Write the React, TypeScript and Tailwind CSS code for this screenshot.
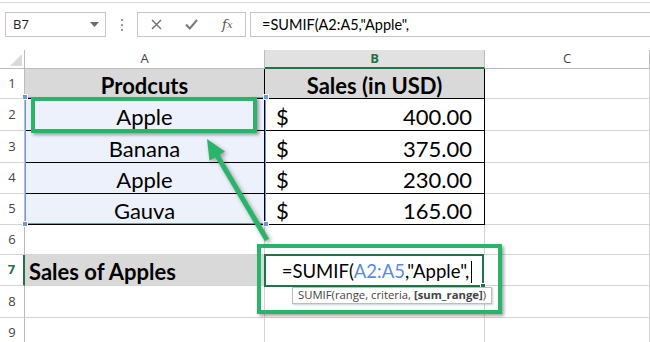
import React from "react";

const GRID = "border-[#d4d4d4]";

function RowHead({ n, active = false, h }: { n: number; active?: boolean; h: string }) {
  return (
    <div
      className={`${h} w-[25px] shrink-0 flex items-center justify-center border-b ${GRID} font-['Open_Sans',sans-serif] text-[13px] ${
        active
          ? "border-r-2 border-r-[#217346] text-[#217346] font-bold"
          : "border-r border-r-[#bcbcbc] text-[#444]"
      }`}
    >
      {n}
    </div>
  );
}

function Row({ n, h, active, a, b }: { n: number; h: string; active?: boolean; a?: React.ReactNode; b?: React.ReactNode }) {
  return (
    <div className={`flex ${h}`}>
      <RowHead n={n} h={h} active={active} />
      {a ?? <div className={`w-[240px] shrink-0 border-r border-b ${GRID}`} />}
      {b ?? <div className={`w-[220px] shrink-0 border-r border-b ${GRID}`} />}
      <div className={`flex-1 border-r border-b ${GRID}`} />
    </div>
  );
}

function Product({ name }: { name: string }) {
  return (
    <div className="w-[240px] shrink-0 border-r border-b border-black bg-[#edf1fb] flex items-center justify-center pt-[3px] text-[22px] text-black">
      {name}
    </div>
  );
}

function Amount({ value }: { value: string }) {
  return (
    <div className="w-[220px] shrink-0 border-r border-b border-black flex items-center justify-between pl-[11px] pr-[12px] pt-[3px] text-[22px] text-black">
      <span>$</span>
      <span>{value}</span>
    </div>
  );
}

function Handle({ className }: { className: string }) {
  return <div className={`absolute w-[6px] h-[6px] bg-[#6d96e8] border border-white ${className}`} />;
}

export default function App() {
  return (
    <div className="relative w-[650px] h-[342px] overflow-hidden bg-white font-['Lato',sans-serif]">
      {/* Formula toolbar */}
      <div className="h-[48px] mt-[2px] border-t border-[#d9d9d9] flex items-start pt-[9px] pl-[5px]">
        <div className="w-[101px] h-[25px] shrink-0 border border-[#c6c6c6] flex items-center justify-between pl-[7px] pr-[6px]">
          <span className="font-['Open_Sans',sans-serif] text-[13px] text-[#222]">B7</span>
          <svg width="9" height="5" viewBox="0 0 9 5">
            <path d="M0 0h9L4.5 5z" fill="#6b6b6b" />
          </svg>
        </div>
        <div className="w-[31px] h-[25px] shrink-0 flex flex-col items-center justify-center gap-[3px]">
          <div className="w-[2px] h-[2px] bg-[#9a9a9a]" />
          <div className="w-[2px] h-[2px] bg-[#9a9a9a]" />
          <div className="w-[2px] h-[2px] bg-[#9a9a9a]" />
        </div>
        <div className="w-[109px] h-[25px] shrink-0 border border-[#c6c6c6] flex items-center">
          <div className="w-[36px] ml-[1px] flex justify-center">
            <svg width="11" height="11" viewBox="0 0 11 11">
              <path d="M1 1l9 9M10 1l-9 9" stroke="#6e6e6e" strokeWidth="1.4" />
            </svg>
          </div>
          <div className="w-[36px] flex justify-center">
            <svg width="13" height="11" viewBox="0 0 13 11">
              <path d="M1 5.5l3.8 4L12 1" stroke="#7a7a7a" strokeWidth="2" fill="none" />
            </svg>
          </div>
          <div className="w-[36px] flex justify-center font-['DejaVu_Serif',serif] italic text-[13px] text-[#555] leading-none">
            f<span className="text-[10px] relative top-[2px]">x</span>
          </div>
        </div>
        <div className="ml-[4px] flex-1 h-[25px] border-y border-l border-[#c6c6c6] flex items-center pl-[11px] text-[14.5px] text-black">
          =SUMIF(A2:A5,"Apple",
        </div>
      </div>

      {/* Column headers */}
      <div className="flex h-[19px] font-['Open_Sans',sans-serif] text-[13px] text-[#444]">
        <div className="w-[25px] shrink-0 border-r border-b border-[#bcbcbc] flex items-end justify-end pr-[2px] pb-[2px]">
          <svg width="12" height="12" viewBox="0 0 12 12">
            <path d="M12 0v12H0z" fill="#dadada" />
          </svg>
        </div>
        <div className="w-[240px] shrink-0 border-r border-b border-[#bcbcbc] flex items-center justify-center">A</div>
        <div className="w-[220px] shrink-0 border-r border-[#bcbcbc] border-b-2 border-b-[#217346] bg-[#e1e1e1] flex items-center justify-center font-bold text-[#217346]">
          B
        </div>
        <div className="flex-1 border-r border-b border-[#bcbcbc] flex items-center justify-center">C</div>
      </div>

      {/* Sheet rows */}
      <Row
        n={1}
        h="h-[30px]"
        a={
          <div className="w-[240px] shrink-0 border-r border-b border-black bg-[#d9d9d9] flex items-center justify-center pt-[3px] text-[22px] font-bold text-black">
            Prodcuts
          </div>
        }
        b={
          <div className="w-[220px] shrink-0 border-r border-b border-black bg-[#d9d9d9] flex items-center justify-center pt-[3px] text-[22px] font-bold text-black">
            Sales (in USD)
          </div>
        }
      />
      <Row n={2} h="h-[32px]" a={<Product name="Apple" />} b={<Amount value="400.00" />} />
      <Row n={3} h="h-[32px]" a={<Product name="Banana" />} b={<Amount value="375.00" />} />
      <Row n={4} h="h-[31px]" a={<Product name="Apple" />} b={<Amount value="230.00" />} />
      <Row n={5} h="h-[31px]" a={<Product name="Gauva" />} b={<Amount value="165.00" />} />
      <Row n={6} h="h-[30px]" />
      <Row
        n={7}
        h="h-[31px]"
        active
        a={
          <div className={`w-[240px] shrink-0 border-r border-b ${GRID} bg-[#d9d9d9] flex items-center pl-[4px] pt-[3px] text-[22px] font-bold text-black`}>
            Sales of Apples
          </div>
        }
        b={
          <div className="relative w-[220px] shrink-0 border-2 border-[#217346] -ml-[1px] -mt-[1px] h-[33px] flex items-center justify-center pl-[6px] pt-[3px] text-[18.5px] text-black">
            <span>
              =SUMIF(<span className="text-[#5a8be0]">A2:A5</span>,"Apple",
            </span>
            <span className="ml-[2px] w-px h-[22px] bg-black" />
            <div className="absolute -right-[4px] -bottom-[4px] w-[6px] h-[6px] bg-[#217346] border border-white" />
          </div>
        }
      />
      <Row n={8} h="h-[32px]" />
      <Row n={9} h="h-[31px]" />

      {/* Range highlight around A2:A5 */}
      <div className="absolute left-[25px] top-[97px] w-[241px] h-[127px] border-[1.5px] border-[#6d96e8]">
        <Handle className="-left-[4px] -top-[4px]" />
        <Handle className="-right-[4px] -top-[4px]" />
        <Handle className="-left-[4px] -bottom-[4px]" />
        <Handle className="-right-[4px] -bottom-[4px]" />
      </div>

      {/* Annotation boxes */}
      <div className="absolute left-[31px] top-[97px] w-[226px] h-[36px] border-4 border-[#29b469] shadow-[2px_2px_3px_rgba(0,0,0,0.35)]" />
      <div className="absolute left-[257px] top-[244px] w-[245px] h-[70px] border-4 border-[#29b469] shadow-[2px_2px_3px_rgba(0,0,0,0.35)]" />

      {/* Function tooltip */}
      <div className="absolute left-[292px] top-[287px] w-[200px] h-[17px] border border-[#bdbdbd] bg-white shadow-[1px_1px_2px_rgba(0,0,0,0.2)] flex items-center pl-[5px] font-['Open_Sans',sans-serif] text-[11.3px] text-[#444] whitespace-nowrap">
        SUMIF(range, criteria, <span className="font-bold ml-[3px]">[sum_range]</span>)
      </div>

      {/* Arrow */}
      <svg className="absolute left-0 top-0" width="650" height="342" viewBox="0 0 650 342">
        <g style={{ filter: "drop-shadow(2px 2px 2px rgba(0,0,0,0.35))" }}>
          <line x1="267" y1="240" x2="215" y2="152" stroke="#29b469" strokeWidth="5" />
          <polygon points="207,139 225,151.6 209.5,160.8" fill="#29b469" />
        </g>
      </svg>
    </div>
  );
}
